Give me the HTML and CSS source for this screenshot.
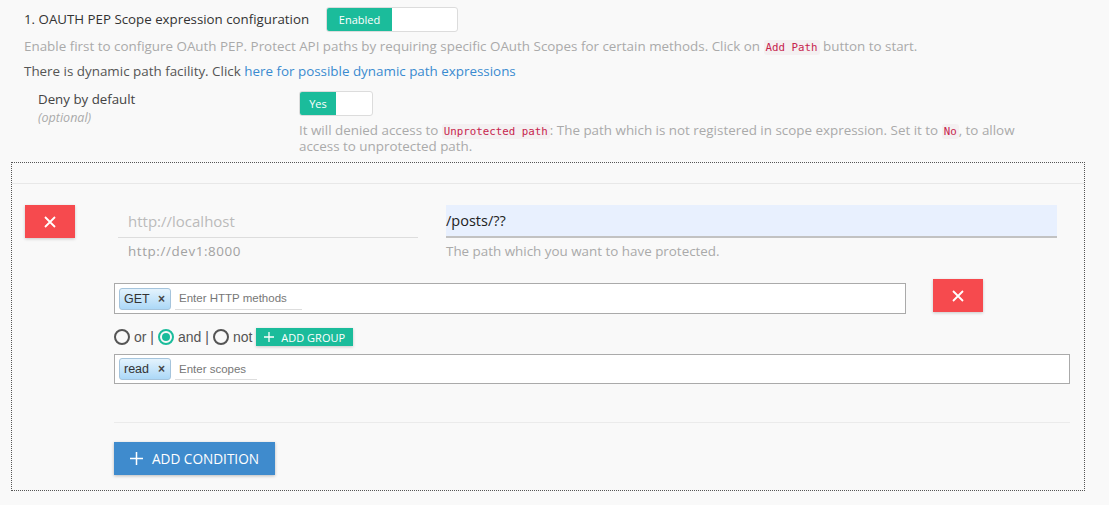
FILE: index.html
```html
<!DOCTYPE html>
<html>
<head>
<meta charset="utf-8">
<link rel="stylesheet" href="styles.css">
</head>
<body>
<div class="page">
  <div class="title-row">
    <span class="title">1. OAUTH PEP Scope expression configuration</span>
    <span class="toggle toggle-wide"><span class="toggle-on">Enabled</span><span class="toggle-off"></span></span>
  </div>
  <p class="help first">Enable first to configure OAuth PEP. Protect API paths by requiring specific OAuth Scopes for certain methods. Click on <code>Add Path</code> button to start.</p>
  <p class="dyn">There is dynamic path facility. Click <a href="#">here for possible dynamic path expressions</a></p>

  <div class="deny-row">
    <div class="deny-label">
      <div class="label">Deny by default</div>
      <div class="optional">(optional)</div>
    </div>
    <div class="deny-control">
      <span class="toggle toggle-small"><span class="toggle-on">Yes</span><span class="toggle-off"></span></span>
      <p class="help deny-help">It will denied access to <code>Unprotected path</code>: The path which is not registered in scope expression. Set it to <code>No</code>, to allow access to unprotected path.</p>
    </div>
  </div>

  <div class="box">
    <div class="box-head"></div>
    <div class="path-row">
      <button class="btn-del"><svg width="14" height="14" viewBox="0 0 14 14"><path d="M2 2L12 12M12 2L2 12" stroke="#fff" stroke-width="1.8"/></svg></button>
      <div class="field host">
        <div class="field-input placeholder">http://localhost</div>
        <div class="field-help">http://dev1:8000</div>
      </div>
      <div class="field path">
        <div class="field-input filled">/posts/??</div>
        <div class="field-help">The path which you want to have protected.</div>
      </div>
    </div>

    <div class="conditions">
      <div class="method-row">
        <div class="tag-input methods">
          <span class="tag">GET <span class="tag-x">×</span></span>
          <span class="tag-placeholder ph-methods">Enter HTTP methods</span>
        </div>
        <button class="btn-del btn-del2"><svg width="14" height="14" viewBox="0 0 14 14"><path d="M2 2L12 12M12 2L2 12" stroke="#fff" stroke-width="1.8"/></svg></button>
      </div>
      <div class="radio-row">
        <span class="radio"></span><span class="rlabel">or |</span>
        <span class="radio checked"></span><span class="rlabel">and |</span>
        <span class="radio"></span><span class="rlabel">not</span>
        <button class="btn-group"><svg width="10" height="10" viewBox="0 0 10 10"><path d="M5 0V10M0 5H10" stroke="#fff" stroke-width="1.3"/></svg>ADD GROUP</button>
      </div>
      <div class="tag-input scopes">
        <span class="tag">read <span class="tag-x">×</span></span>
        <span class="tag-placeholder ph-scopes">Enter scopes</span>
      </div>
      <div class="divider"></div>
      <button class="btn-add"><svg width="13" height="13" viewBox="0 0 13 13"><path d="M6.5 0V13M0 6.5H13" stroke="#fff" stroke-width="1.5"/></svg>ADD CONDITION</button>
    </div>
  </div>
</div>
</body>
</html>
```

FILE: styles.css
```css
* { box-sizing: border-box; }
body {
  margin: 0;
  background: #f9f9f9;
  font-family: "Open Sans", "Noto Sans", sans-serif;
  color: #444;
}
.page {
  padding: 6px 0 0 0;
}
.title-row {
  display: flex;
  align-items: center;
  gap: 18px;
  padding-left: 24px;
  height: 26px;
}
.title {
  font-size: 13.3px;
  color: #333;
  width: 284px;
  white-space: nowrap;
}
.toggle {
  display: inline-flex;
  border: 1px solid #dcdcdc;
  border-radius: 3px;
  background: #fff;
  height: 25px;
  overflow: hidden;
}
.toggle-on {
  background: #1bbc9b;
  color: #fff;
  font-size: 11px;
  display: flex;
  align-items: center;
  justify-content: center;
}
.toggle-wide { width: 132px; }
.toggle-wide .toggle-on { width: 65px; }
.toggle-small { width: 74px; }
.toggle-small .toggle-on { width: 36px; }
.help {
  color: #aaa;
  font-size: 13.4px;
  margin: 0;
  line-height: 16px;
}
.first {
  padding-left: 24px;
  margin-top: 6px;
}
code {
  font-family: "DejaVu Sans Mono", "Liberation Mono", monospace;
  font-size: 10.8px;
  line-height: 1;
  color: #c7254e;
  background: #f4f0f1;
  padding: 1px 2px;
  border-radius: 3px;
}
.dyn {
  margin: 9px 0 0 0;
  padding-left: 24px;
  font-size: 13.4px;
  line-height: 16px;
  color: #555;
}
.dyn a {
  color: #3a8bd0;
  text-decoration: none;
}
.deny-row {
  display: grid;
  grid-template-columns: 261px 1fr;
  padding-left: 38px;
  margin-top: 12px;
}
.deny-label .label {
  font-size: 13.3px;
  color: #444;
  margin-top: 0;
  line-height: 16px;
}
.deny-label .optional {
  font-size: 12.5px;
  font-style: italic;
  color: #aaa;
  margin-top: 2px;
}
.deny-help {
  margin-top: 6px;
  width: 730px;
}
.box {
  margin: 8px 0 0 11px;
  width: 1074px;
  border: 1px dotted #555;
  height: 329px;
}
.box-head {
  height: 21px;
  border-bottom: 1px solid #e8e8e8;
}
.path-row {
  display: flex;
  align-items: flex-start;
  margin-top: 21px;
  padding-left: 13px;
}
.btn-del {
  width: 50px;
  height: 33px;
  border: none;
  background: #f64a4e;
  display: flex;
  align-items: center;
  justify-content: center;
  box-shadow: 0 1px 3px rgba(0,0,0,0.2);
  padding: 0;
}
.field { display: flex; flex-direction: column; }
.host { width: 300px; margin-left: 43px; }
.path { width: 611px; margin-left: 28px; }
.field-input {
  height: 33px;
  font-size: 15px;
  display: flex;
  align-items: center;
  border-bottom: 1px solid #ddd;
}
.field-input.placeholder { color: #bbb; padding-left: 10px; }
.field-input.filled {
  background: #e8f0fe;
  color: #222;
  font-size: 14.5px;
  border-bottom: 2px solid #c2c2c2;
}
.field-help {
  font-size: 13.4px;
  line-height: 17px;
  color: #aaa;
  margin-top: 5px;
}
.host .field-help { padding-left: 10px; color: #a2a2a2; letter-spacing: 0.6px; }
.conditions {
  padding-left: 102px;
  margin-top: 19px;
}
.method-row {
  display: flex;
  align-items: flex-start;
}
.tag-input {
  background: #fff;
  border: 1px solid #aaa;
  display: flex;
  align-items: center;
  padding-left: 4px;
  font-family: "Liberation Sans", Arial, sans-serif;
}
.methods { width: 792px; height: 31px; margin-top: 4px; }
.scopes { width: 956px; height: 30px; margin-top: 8px; }
.btn-del2 { margin-left: 27px; }
.tag {
  display: inline-flex;
  align-items: center;
  height: 22px;
  padding: 0 5px 0 4px;
  border: 1px solid #a5c4dc;
  border-radius: 3px;
  background: linear-gradient(#e4f3fd, #acd8f7);
  font-size: 12.5px;
  color: #333;
  width: 52px;
  justify-content: space-between;
}
.tag-x { font-size: 12px; font-weight: bold; color: #444; }
.tag-placeholder {
  font-size: 11.5px;
  color: #777;
  margin-left: 4px;
  padding: 0 4px;
  height: 22px;
  display: flex;
  align-items: center;
  border-bottom: 1px solid #ddd;
}
.ph-methods { width: 127px; }
.ph-scopes { width: 82px; }
.radio-row {
  display: flex;
  align-items: center;
  margin-top: 14px;
  height: 18px;
  font-family: "Liberation Sans", Arial, sans-serif;
  font-size: 14px;
  color: #555;
}
.radio {
  width: 16px;
  height: 16px;
  border: 2px solid #555;
  border-radius: 50%;
  display: inline-flex;
  align-items: center;
  justify-content: center;
}
.radio.checked { border-color: #1bbc9b; }
.radio.checked::after {
  content: "";
  width: 8px;
  height: 8px;
  border-radius: 50%;
  background: #1bbc9b;
}
.rlabel { margin: 0 4px 0 4px; }
.btn-group {
  margin-left: 0;
  height: 18px;
  width: 97px;
  background: #1bbc9b;
  color: #fff;
  border: none;
  font-family: "Open Sans", sans-serif;
  font-size: 11px;
  display: flex;
  align-items: center;
  gap: 7px;
  padding: 0 0 0 8px;
  box-shadow: 0 1px 3px rgba(0,0,0,0.2);
}
.divider {
  width: 956px;
  border-top: 1px solid #ebebeb;
  margin-top: 38px;
}
.btn-add {
  margin-top: 19px;
  width: 161px;
  height: 33px;
  background: #3f8bcd;
  color: #fff;
  border: none;
  font-family: "Open Sans", sans-serif;
  font-size: 13.6px;
  display: flex;
  align-items: center;
  justify-content: center;
  gap: 9px;
  box-shadow: 0 1px 3px rgba(0,0,0,0.25);
}
```
